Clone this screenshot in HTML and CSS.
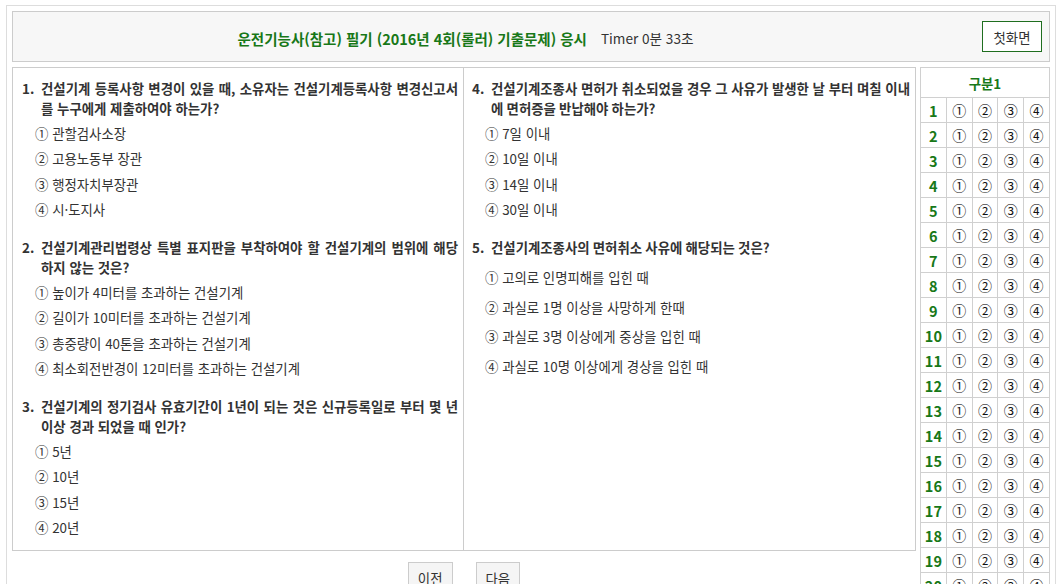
FILE: index.html
```html
<!DOCTYPE html>
<html lang="ko">
<head>
<meta charset="utf-8">
<title>운전기능사 필기 응시</title>
<link rel="stylesheet" href="styles.css">
</head>
<body>
<div class="frame">
  <div class="header">
    <div class="title-cell">
      <span class="title">운전기능사(참고) 필기 (2016년 4회(롤러) 기출문제) 응시</span>
      <span class="timer">Timer 0분 33초</span>
    </div>
    <div class="btn-cell"><button class="home-btn">첫화면</button></div>
  </div>
  <div class="main">
    <div class="left">
      <div class="qbox">
        <div class="q">
          <div class="qt"><span class="qn">1.</span><span class="qx">건설기계 등록사항 변경이 있을 때, 소유자는 건설기계등록사항 변경신고서를 누구에게 제출하여야 하는가?</span></div>
          <div class="opts">
            <div class="opt">① 관할검사소장</div>
            <div class="opt">② 고용노동부 장관</div>
            <div class="opt">③ 행정자치부장관</div>
            <div class="opt">④ 시·도지사</div>
          </div>
        </div>
        <div class="q">
          <div class="qt"><span class="qn">4.</span><span class="qx">건설기계조종사 면허가 취소되었을 경우 그 사유가 발생한 날 부터 며칠 이내에 면허증을 반납해야 하는가?</span></div>
          <div class="opts">
            <div class="opt">① 7일 이내</div>
            <div class="opt">② 10일 이내</div>
            <div class="opt">③ 14일 이내</div>
            <div class="opt">④ 30일 이내</div>
          </div>
        </div>
        <div class="q">
          <div class="qt"><span class="qn">2.</span><span class="qx">건설기계관리법령상 특별 표지판을 부착하여야 할 건설기계의 범위에 해당하지 않는 것은?</span></div>
          <div class="opts">
            <div class="opt">① 높이가 4미터를 초과하는 건설기계</div>
            <div class="opt">② 길이가 10미터를 초과하는 건설기계</div>
            <div class="opt">③ 총중량이 40톤을 초과하는 건설기계</div>
            <div class="opt">④ 최소회전반경이 12미터를 초과하는 건설기계</div>
          </div>
        </div>
        <div class="q single">
          <div class="qt"><span class="qn">5.</span><span class="qx">건설기계조종사의 면허취소 사유에 해당되는 것은?</span></div>
          <div class="opts">
            <div class="opt">① 고의로 인명피해를 입힌 때</div>
            <div class="opt">② 과실로 1명 이상을 사망하게 한때</div>
            <div class="opt">③ 과실로 3명 이상에게 중상을 입힌 때</div>
            <div class="opt">④ 과실로 10명 이상에게 경상을 입힌 때</div>
          </div>
        </div>
        <div class="q last">
          <div class="qt"><span class="qn">3.</span><span class="qx">건설기계의 정기검사 유효기간이 1년이 되는 것은 신규등록일로 부터 몇 년 이상 경과 되었을 때 인가?</span></div>
          <div class="opts">
            <div class="opt">① 5년</div>
            <div class="opt">② 10년</div>
            <div class="opt">③ 15년</div>
            <div class="opt">④ 20년</div>
          </div>
        </div>
        <div class="q last"></div>
      </div>
      <div class="nav">
        <button class="nav-btn">이전</button>
        <button class="nav-btn">다음</button>
      </div>
    </div>
    <table class="omr">
      <thead>
        <tr><th colspan="5" class="omr-head">구분1</th></tr>
      </thead>
      <tbody>
        <tr><td class="num">1</td><td>①</td><td>②</td><td>③</td><td>④</td></tr>
        <tr><td class="num">2</td><td>①</td><td>②</td><td>③</td><td>④</td></tr>
        <tr><td class="num">3</td><td>①</td><td>②</td><td>③</td><td>④</td></tr>
        <tr><td class="num">4</td><td>①</td><td>②</td><td>③</td><td>④</td></tr>
        <tr><td class="num">5</td><td>①</td><td>②</td><td>③</td><td>④</td></tr>
        <tr><td class="num">6</td><td>①</td><td>②</td><td>③</td><td>④</td></tr>
        <tr><td class="num">7</td><td>①</td><td>②</td><td>③</td><td>④</td></tr>
        <tr><td class="num">8</td><td>①</td><td>②</td><td>③</td><td>④</td></tr>
        <tr><td class="num">9</td><td>①</td><td>②</td><td>③</td><td>④</td></tr>
        <tr><td class="num">10</td><td>①</td><td>②</td><td>③</td><td>④</td></tr>
        <tr><td class="num">11</td><td>①</td><td>②</td><td>③</td><td>④</td></tr>
        <tr><td class="num">12</td><td>①</td><td>②</td><td>③</td><td>④</td></tr>
        <tr><td class="num">13</td><td>①</td><td>②</td><td>③</td><td>④</td></tr>
        <tr><td class="num">14</td><td>①</td><td>②</td><td>③</td><td>④</td></tr>
        <tr><td class="num">15</td><td>①</td><td>②</td><td>③</td><td>④</td></tr>
        <tr><td class="num">16</td><td>①</td><td>②</td><td>③</td><td>④</td></tr>
        <tr><td class="num">17</td><td>①</td><td>②</td><td>③</td><td>④</td></tr>
        <tr><td class="num">18</td><td>①</td><td>②</td><td>③</td><td>④</td></tr>
        <tr><td class="num">19</td><td>①</td><td>②</td><td>③</td><td>④</td></tr>
        <tr><td class="num">20</td><td>①</td><td>②</td><td>③</td><td>④</td></tr>
      </tbody>
    </table>
  </div>
</div>
</body>
</html>
```
FILE: styles.css
```css
html, body {
  overflow: hidden;
}
body {
  margin: 0;
  background: #fff;
  font-family: "Noto Sans CJK KR", "Noto Sans", sans-serif;
  font-size: 13.4px;
  color: #333;
}
.frame {
  margin: 5px 7px 0 6px;
  border: 1px solid #ddd;
  border-bottom: none;
  padding: 5px 5px 0 5px;
  height: 600px;
}
.header {
  display: flex;
  height: 51px;
  box-sizing: border-box;
  border: 1px solid #ccc;
  background: #f7f7f7;
}
.title-cell {
  width: 905px;
  display: flex;
  align-items: center;
  justify-content: center;
  gap: 14px;
  padding-top: 3px;
}
.title {
  color: #187818;
  font-weight: bold;
  font-size: 14.5px;
}
.timer {
  font-size: 13.6px;
  color: #333;
}
.btn-cell {
  flex: 1;
  display: flex;
  align-items: center;
  justify-content: flex-end;
  padding-right: 7px;
}
.home-btn {
  width: 60px;
  height: 31px;
  border: 1px solid #1f6e1f;
  background: #fff;
  font-family: inherit;
  font-size: 13.4px;
  color: #333;
  padding: 0;
}
.main {
  display: flex;
  margin-top: 5px;
  gap: 4px;
  align-items: flex-start;
}
.left {
  width: 904px;
}
.qbox {
  border: 1px solid #ccc;
  display: grid;
  grid-template-columns: 451px 451px;
}
.q {
  display: flex;
  flex-direction: column;
  padding: 10px 5px 5px 9px;
}
.q:nth-child(odd) {
  border-right: 1px solid #ccc;
}
.q:nth-child(even) {
  padding-left: 8px;
}
.q:nth-child(even) .qx {
  word-spacing: -0.5px;
}
.q.last {
  padding-bottom: 10px;
}
.qt {
  display: flex;
  font-weight: bold;
  line-height: 20px;
  color: #333;
}
.qn {
  flex: 0 0 19px;
}
.qx {
  flex: 1;
  text-align: justify;
}
.opts {
  flex: 1;
  display: flex;
  flex-direction: column;
  margin-top: 2px;
}
.q.single .opts {
  margin-top: 5px;
}
.opt {
  flex: 1 1 25.5px;
  display: flex;
  align-items: center;
  padding-left: 13px;
  min-height: 25.5px;
}
.nav {
  display: flex;
  justify-content: center;
  gap: 23px;
  margin-top: 11px;
}
.nav-btn {
  height: 31px;
  padding: 0 9px;
  border: 1px solid #ccc;
  background: #f5f5f5;
  font-family: inherit;
  font-size: 13.4px;
  color: #333;
}
.omr {
  border-collapse: collapse;
  width: 130px;
  table-layout: fixed;
}
.omr th, .omr td {
  border: 1px solid #d0d0d0;
  text-align: center;
  padding: 0;
}
.omr-head {
  height: 29px;
  color: #187818;
  font-weight: bold;
  font-size: 13.4px;
}
.omr td {
  height: 24px;
  width: 24px;
  font-size: 14px;
  color: #111;
}
.omr td.num {
  width: 28px;
  color: #187818;
  font-weight: bold;
  font-size: 14.5px;
}
```
